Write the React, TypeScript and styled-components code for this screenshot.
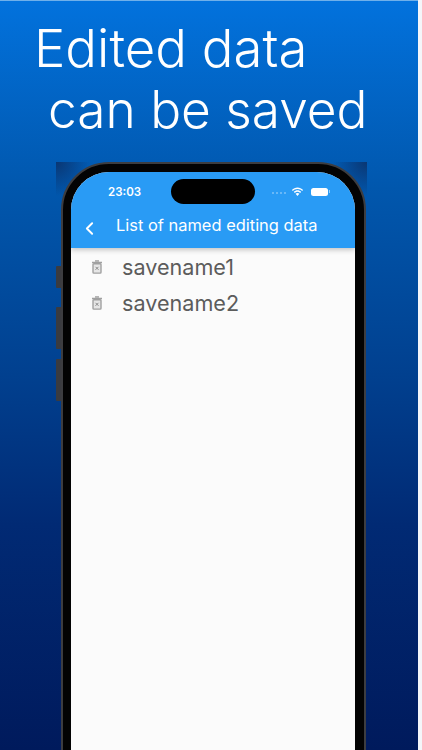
import React from 'react';
import styled, { createGlobalStyle } from 'styled-components';
import { ChevronLeft } from 'lucide-react';

const GlobalStyle = createGlobalStyle`
  html, body {
    margin: 0;
    padding: 0;
    background: #f4f6fa;
    overflow: hidden;
  }
  * {
    box-sizing: border-box;
  }
`;

const Poster = styled.div`
  width: 418px;
  height: 750px;
  overflow: hidden;
  border-top: 1px solid #6fb0ea;
  background: linear-gradient(180deg, #0272dd 0%, #0157ad 25%, #01408f 50%, #012a74 70%, #001a5c 100%);
  font-family: Inter, 'Liberation Sans', sans-serif;
  font-optical-sizing: none;
`;

const Heading = styled.h1`
  margin: 0;
  height: 161px;
  padding: 17px 0 0 34px;
  color: #fff;
  font-weight: 300;
  line-height: 61px;
  white-space: nowrap;
`;

const HeadingLine = styled.span<{ $indent?: number; $size: number }>`
  display: block;
  padding-left: ${(p) => p.$indent ?? 0}px;
  font-size: ${(p) => p.$size}px;
`;

const Backdrop = styled.div`
  width: 311px;
  height: 600px;
  margin-left: 56px;
  padding-left: 5px;
  background:
    radial-gradient(circle at 0 0, #0a3672 0, rgba(10, 54, 114, 0) 34px),
    radial-gradient(circle at 100% 0, #0a3672 0, rgba(10, 54, 114, 0) 34px);
`;

const Frame = styled.div`
  position: relative;
  width: 305px;
  height: 620px;
  padding: 8px 9px 0 8px;
  background: #030303;
  border: 2px solid #3d3d40;
  border-radius: 48px 48px 0 0;
`;

const SideButton = styled.span<{ $top: number; $height: number }>`
  position: absolute;
  left: -7px;
  top: ${(p) => p.$top}px;
  width: 5px;
  height: ${(p) => p.$height}px;
  background: #3a3b40;
  border-radius: 1px 0 0 1px;
`;

const Screen = styled.div`
  height: 100%;
  overflow: hidden;
  background: #fbfbfb;
  border-radius: 38px 38px 0 0;
`;

const AppBar = styled.header`
  height: 76px;
  background: #299bf5;
  color: #fff;
  box-shadow: 0 2px 5px rgba(0, 0, 0, 0.22);
`;

const StatusBar = styled.div`
  height: 38px;
  display: grid;
  grid-template-columns: 100px 84px 100px;
  align-items: center;
  padding-top: 1px;
`;

const Clock = styled.span`
  padding-left: 37px;
  font-size: 11.5px;
  font-weight: 600;
`;

const Island = styled.div`
  height: 25px;
  background: #000;
  border-radius: 13px;
`;

const StatusIcons = styled.div`
  display: flex;
  align-items: center;
  justify-content: flex-end;
  padding-right: 27px;
`;

const Dots = styled.span`
  display: flex;
  gap: 2px;
  margin-right: 5px;
  padding-top: 3px;
`;

const Dot = styled.i`
  width: 2px;
  height: 2px;
  border-radius: 50%;
  background: rgba(255, 255, 255, 0.4);
`;

const Battery = styled.span`
  position: relative;
  width: 17px;
  height: 8px;
  margin-left: 7px;
  background: #fff;
  border-radius: 2.5px;

  &::after {
    content: '';
    position: absolute;
    right: -2px;
    top: 2.5px;
    width: 1px;
    height: 3px;
    background: rgba(255, 255, 255, 0.5);
  }
`;

const TitleRow = styled.div`
  display: flex;
  align-items: center;
  height: 30px;
  padding-left: 8px;
`;

const BackIcon = styled(ChevronLeft)`
  flex: none;
  margin-top: 6px;
  width: 21px;
  height: 21px;
  stroke-width: 2.2;
`;

const Title = styled.h2`
  margin: 0 0 0 16px;
  font-size: 16.45px;
  font-weight: 400;
  line-height: 24px;
  white-space: nowrap;
`;

const SaveList = styled.ul`
  list-style: none;
  margin: 0;
  padding: 1px 0 0;
`;

const SaveRow = styled.li`
  display: flex;
  align-items: center;
  height: 36px;
  padding-left: 21px;
  color: #5c5c5c;
  font-size: 21.6px;
`;

const SaveName = styled.span`
  margin-left: 20px;
`;

const TrashIcon = () => (
  <svg width="10" height="14" viewBox="0 0 10 14" fill="none" stroke="#a0a0a0">
    <path d="M3 .9h4M0 2.5h10" strokeWidth="1.3" />
    <rect x="1" y="3.7" width="8" height="9.4" rx=".8" strokeWidth="1.4" fill="#e6e6e6" />
    <path d="M3.5 6.8l3 3M6.5 6.8l-3 3" strokeWidth="1" stroke="#8a8a8a" />
  </svg>
);

const WifiIcon = () => (
  <svg width="13" height="10" viewBox="0 0 13 10" fill="#fff">
    <path d="M6.5 2.1c1.8 0 3.4.7 4.6 1.9l1-1.1C10.6 1.4 8.7.5 6.5.5S2.4 1.4.9 2.9l1 1.1c1.2-1.2 2.8-1.9 4.6-1.9z" />
    <path d="M6.5 4.8c1 0 1.9.4 2.7 1.1l1-1.1C9.2 3.8 7.9 3.2 6.5 3.2s-2.7.6-3.7 1.6l1 1.1c.8-.7 1.7-1.1 2.7-1.1z" />
    <path d="M6.5 6c-.8 0-1.4.3-1.9.8l1.9 2.2 1.9-2.2C7.9 6.3 7.3 6 6.5 6z" />
  </svg>
);

const saves = ['savename1', 'savename2'];

export default function App() {
  return (
    <>
      <GlobalStyle />
      <Poster>
        <Heading>
          <HeadingLine $size={52.7}>Edited data</HeadingLine>
          <HeadingLine $size={51.4} $indent={14}>can be saved</HeadingLine>
        </Heading>
        <Backdrop>
          <Frame>
            <SideButton $top={102} $height={22} />
            <SideButton $top={143} $height={42} />
            <SideButton $top={195} $height={42} />
            <Screen>
              <AppBar>
                <StatusBar>
                  <Clock>23:03</Clock>
                  <Island />
                  <StatusIcons>
                    <Dots>
                      <Dot />
                      <Dot />
                      <Dot />
                      <Dot />
                    </Dots>
                    <WifiIcon />
                    <Battery />
                  </StatusIcons>
                </StatusBar>
                <TitleRow>
                  <BackIcon />
                  <Title>List of named editing data</Title>
                </TitleRow>
              </AppBar>
              <SaveList>
                {saves.map((name) => (
                  <SaveRow key={name}>
                    <TrashIcon />
                    <SaveName>{name}</SaveName>
                  </SaveRow>
                ))}
              </SaveList>
            </Screen>
          </Frame>
        </Backdrop>
      </Poster>
    </>
  );
}
